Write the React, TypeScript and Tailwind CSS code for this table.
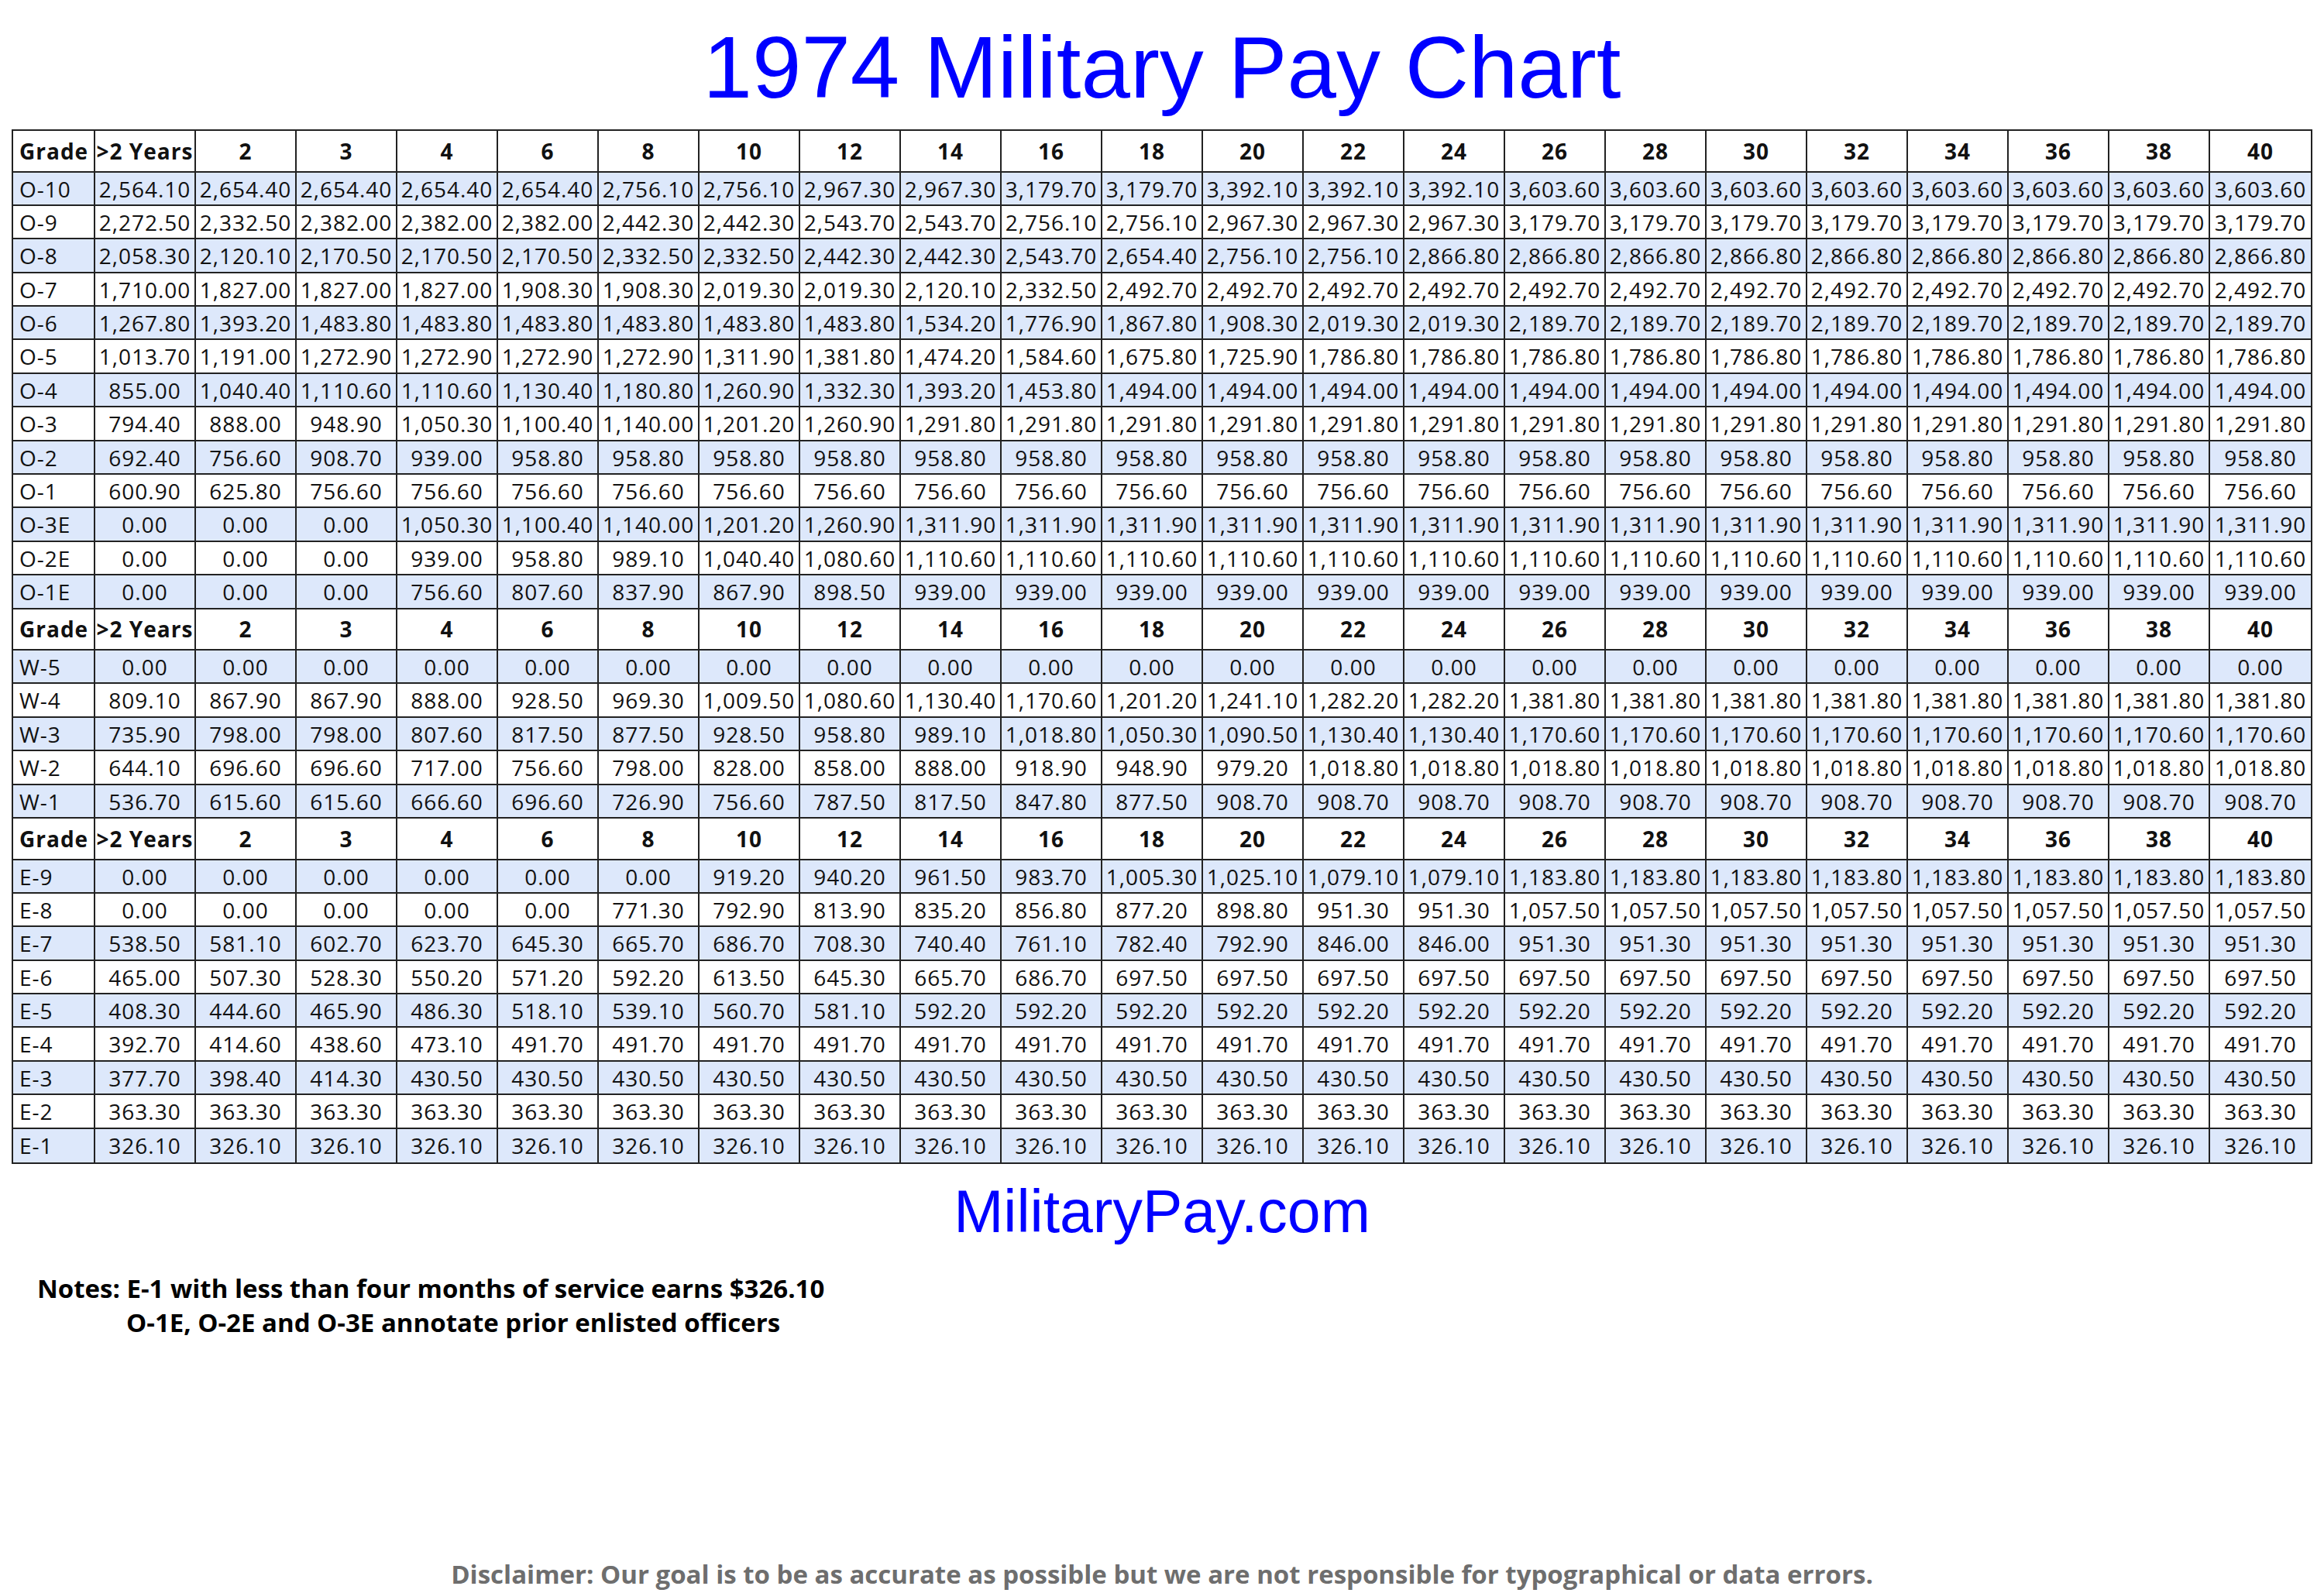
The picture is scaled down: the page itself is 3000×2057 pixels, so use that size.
const HEADERS = [">2 Years", "2", "3", "4", "6", "8", "10", "12", "14", "16", "18", "20", "22", "24", "26", "28", "30", "32", "34", "36", "38", "40"]

// "value*count" expands to count copies of value
function expand(spec: string): string[] {
  return spec.split(" ").flatMap((s) => {
    const [v, n] = s.split("*")
    return Array(n ? Number(n) : 1).fill(v)
  })
}

const officers: [string, string][] = [
  ["O-10", "2,564.10 2,654.40*4 2,756.10*2 2,967.30*2 3,179.70*2 3,392.10*3 3,603.60*8"],
  ["O-9", "2,272.50 2,332.50 2,382.00*3 2,442.30*2 2,543.70*2 2,756.10*2 2,967.30*3 3,179.70*8"],
  ["O-8", "2,058.30 2,120.10 2,170.50*3 2,332.50*2 2,442.30*2 2,543.70 2,654.40 2,756.10*2 2,866.80*9"],
  ["O-7", "1,710.00 1,827.00*3 1,908.30*2 2,019.30*2 2,120.10 2,332.50 2,492.70*12"],
  ["O-6", "1,267.80 1,393.20 1,483.80*6 1,534.20 1,776.90 1,867.80 1,908.30 2,019.30*2 2,189.70*8"],
  ["O-5", "1,013.70 1,191.00 1,272.90*4 1,311.90 1,381.80 1,474.20 1,584.60 1,675.80 1,725.90 1,786.80*10"],
  ["O-4", "855.00 1,040.40 1,110.60*2 1,130.40 1,180.80 1,260.90 1,332.30 1,393.20 1,453.80 1,494.00*12"],
  ["O-3", "794.40 888.00 948.90 1,050.30 1,100.40 1,140.00 1,201.20 1,260.90 1,291.80*14"],
  ["O-2", "692.40 756.60 908.70 939.00 958.80*18"],
  ["O-1", "600.90 625.80 756.60*20"],
  ["O-3E", "0.00*3 1,050.30 1,100.40 1,140.00 1,201.20 1,260.90 1,311.90*14"],
  ["O-2E", "0.00*3 939.00 958.80 989.10 1,040.40 1,080.60 1,110.60*14"],
  ["O-1E", "0.00*3 756.60 807.60 837.90 867.90 898.50 939.00*14"],
]

const warrant: [string, string][] = [
  ["W-5", "0.00*22"],
  ["W-4", "809.10 867.90*2 888.00 928.50 969.30 1,009.50 1,080.60 1,130.40 1,170.60 1,201.20 1,241.10 1,282.20*2 1,381.80*8"],
  ["W-3", "735.90 798.00*2 807.60 817.50 877.50 928.50 958.80 989.10 1,018.80 1,050.30 1,090.50 1,130.40*2 1,170.60*8"],
  ["W-2", "644.10 696.60*2 717.00 756.60 798.00 828.00 858.00 888.00 918.90 948.90 979.20 1,018.80*10"],
  ["W-1", "536.70 615.60*2 666.60 696.60 726.90 756.60 787.50 817.50 847.80 877.50 908.70*11"],
]

const enlisted: [string, string][] = [
  ["E-9", "0.00*6 919.20 940.20 961.50 983.70 1,005.30 1,025.10 1,079.10*2 1,183.80*8"],
  ["E-8", "0.00*5 771.30 792.90 813.90 835.20 856.80 877.20 898.80 951.30*2 1,057.50*8"],
  ["E-7", "538.50 581.10 602.70 623.70 645.30 665.70 686.70 708.30 740.40 761.10 782.40 792.90 846.00*2 951.30*8"],
  ["E-6", "465.00 507.30 528.30 550.20 571.20 592.20 613.50 645.30 665.70 686.70 697.50*12"],
  ["E-5", "408.30 444.60 465.90 486.30 518.10 539.10 560.70 581.10 592.20*14"],
  ["E-4", "392.70 414.60 438.60 473.10 491.70*18"],
  ["E-3", "377.70 398.40 414.30 430.50*19"],
  ["E-2", "363.30*22"],
  ["E-1", "326.10*22"],
]

const rowGrid = "grid grid-cols-[106px_repeat(22,130px)]"
const cellBase = "flex items-center border-[#222]"

function HeaderRow() {
  return (
    <div className={`${rowGrid} h-[53.5px] border-b-2 border-[#222] bg-white font-bold`}>
      <div className={`${cellBase} border-r-2 pl-[8px]`}>Grade</div>
      {HEADERS.map((h, i) => (
        <div
          key={h}
          className={`${cellBase} justify-center whitespace-nowrap ${i < HEADERS.length - 1 ? "border-r-2" : ""}`}
        >
          {h}
        </div>
      ))}
    </div>
  )
}

function Section({ rows, last }: { rows: [string, string][]; last?: boolean }) {
  return (
    <>
      <HeaderRow />
      {rows.map(([grade, spec], r) => {
        const values = expand(spec)
        const isLast = last && r === rows.length - 1
        return (
          <div
            key={grade}
            className={`${rowGrid} h-[43.4px] ${isLast ? "" : "border-b-2 border-[#222]"} ${r % 2 === 0 ? "bg-[#dde8fb]" : "bg-white"}`}
          >
            <div className={`${cellBase} border-r-2 pl-[8px]`}>{grade}</div>
            {values.map((v, i) => (
              <div
                key={i}
                className={`${cellBase} justify-center whitespace-nowrap ${i < values.length - 1 ? "border-r-2" : ""}`}
              >
                {v}
              </div>
            ))}
          </div>
        )
      })}
    </>
  )
}

export default function App() {
  return (
    <div className="w-[3000px] h-[2057px] bg-white flex flex-col font-['Liberation_Sans',Arial,sans-serif]">
      {/* Title */}
      <h1 className="pt-[30px] text-center text-[114px] leading-[114px] text-[#0000ff]">
        1974 Military Pay Chart
      </h1>

      {/* Pay table */}
      <div className="mt-[23px] ml-[15px] w-[2970px] border-2 border-[#222] text-[28px] tracking-[1px] text-[#111] font-['Open_Sans',sans-serif]">
        <Section rows={officers} />
        <Section rows={warrant} />
        <Section rows={enlisted} last />
      </div>

      <div className="mt-[23px] text-center text-[77px] leading-[77px] text-[#0000ff]">
        MilitaryPay.com
      </div>

      {/* Notes */}
      <div className="mt-[39px] ml-[48px] text-[33px] leading-[44px] font-bold text-black font-['Open_Sans',sans-serif]">
        <p>Notes: E-1 with less than four months of service earns $326.10</p>
        <p className="pl-[115px]">O-1E, O-2E and O-3E annotate prior enlisted officers</p>
      </div>

      <p className="mt-[281px] text-center text-[33px] leading-[44px] font-bold text-[#6e6e6e] font-['Open_Sans',sans-serif]">
        Disclaimer: Our goal is to be as accurate as possible but we are not responsible for typographical or data errors.
      </p>
    </div>
  )
}
